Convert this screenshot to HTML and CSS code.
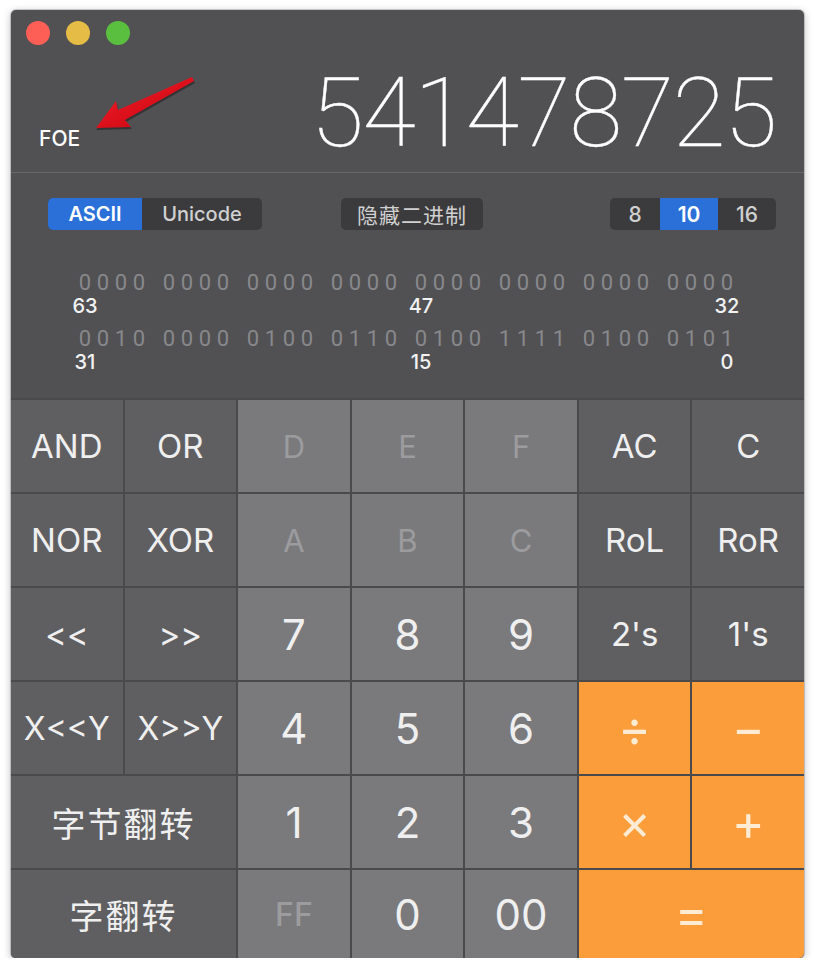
FILE: index.html
```html
<!DOCTYPE html>
<html lang="zh">
<head>
<meta charset="utf-8">
<title>Programmer Calculator</title>
<link rel="stylesheet" href="styles.css">
</head>
<body>
<div class="window">
  <header class="titlebar">
    <div class="lights">
      <span class="light red"></span>
      <span class="light yellow"></span>
      <span class="light green"></span>
    </div>
    <div class="display">
      <span class="mode">FOE</span>
      <span class="value">541478725</span>
    </div>
    <svg class="arrow" width="200" height="140" viewBox="0 0 200 140">
      <defs>
        <linearGradient id="ar" x1="0" y1="0" x2="1" y2="1">
          <stop offset="0" stop-color="#f5222c"/>
          <stop offset="1" stop-color="#c4000c"/>
        </linearGradient>
      </defs>
      <polygon class="arrow-shadow" points="85,120 106,93 108,102 182,69 184,73 115,112 121,119"/>
      <polygon fill="url(#ar)" points="85,118 105,91 107,100 181,67 183,71 114,110 120,117"/>
    </svg>
  </header>

  <section class="panel">
    <div class="controls">
      <div class="seg left">
        <span class="seg-item w94 active">ASCII</span>
        <span class="seg-item w120">Unicode</span>
      </div>
      <div class="seg center">
        <span class="seg-item w142 cjk">隐藏二进制</span>
      </div>
      <div class="seg right">
        <span class="seg-item w50">8</span>
        <span class="seg-item w58 active">10</span>
        <span class="seg-item w58">16</span>
      </div>
    </div>

    <div class="bits">
      <div class="bitrow">
        <div class="grp"><span>0</span><span>0</span><span>0</span><span>0</span></div>
        <div class="grp"><span>0</span><span>0</span><span>0</span><span>0</span></div>
        <div class="grp"><span>0</span><span>0</span><span>0</span><span>0</span></div>
        <div class="grp"><span>0</span><span>0</span><span>0</span><span>0</span></div>
        <div class="grp"><span>0</span><span>0</span><span>0</span><span>0</span></div>
        <div class="grp"><span>0</span><span>0</span><span>0</span><span>0</span></div>
        <div class="grp"><span>0</span><span>0</span><span>0</span><span>0</span></div>
        <div class="grp"><span>0</span><span>0</span><span>0</span><span>0</span></div>
      </div>
      <div class="lblrow">
        <span class="lbl first">63</span>
        <span class="lbl mid">47</span>
        <span class="lbl last">32</span>
      </div>
      <div class="bitrow second">
        <div class="grp"><span>0</span><span>0</span><span>1</span><span>0</span></div>
        <div class="grp"><span>0</span><span>0</span><span>0</span><span>0</span></div>
        <div class="grp"><span>0</span><span>1</span><span>0</span><span>0</span></div>
        <div class="grp"><span>0</span><span>1</span><span>1</span><span>0</span></div>
        <div class="grp"><span>0</span><span>1</span><span>0</span><span>0</span></div>
        <div class="grp"><span>1</span><span>1</span><span>1</span><span>1</span></div>
        <div class="grp"><span>0</span><span>1</span><span>0</span><span>0</span></div>
        <div class="grp"><span>0</span><span>1</span><span>0</span><span>1</span></div>
      </div>
      <div class="lblrow">
        <span class="lbl first">31</span>
        <span class="lbl mid">15</span>
        <span class="lbl last">0</span>
      </div>
    </div>
  </section>

  <main class="keys">
    <div class="key fn">AND</div>
    <div class="key fn">OR</div>
    <div class="key hex">D</div>
    <div class="key hex">E</div>
    <div class="key hex">F</div>
    <div class="key fn">AC</div>
    <div class="key fn">C</div>

    <div class="key fn">NOR</div>
    <div class="key fn">XOR</div>
    <div class="key hex">A</div>
    <div class="key hex">B</div>
    <div class="key hex">C</div>
    <div class="key fn">RoL</div>
    <div class="key fn">RoR</div>

    <div class="key fn sym">&lt;&lt;</div>
    <div class="key fn sym">&gt;&gt;</div>
    <div class="key num">7</div>
    <div class="key num">8</div>
    <div class="key num">9</div>
    <div class="key fn">2's</div>
    <div class="key fn">1's</div>

    <div class="key fn shift">X&lt;&lt;Y</div>
    <div class="key fn shift">X&gt;&gt;Y</div>
    <div class="key num">4</div>
    <div class="key num">5</div>
    <div class="key num">6</div>
    <div class="key op">÷</div>
    <div class="key op">−</div>

    <div class="key fn cjk span2">字节翻转</div>
    <div class="key num">1</div>
    <div class="key num">2</div>
    <div class="key num">3</div>
    <div class="key op">×</div>
    <div class="key op">+</div>

    <div class="key fn cjk span2">字翻转</div>
    <div class="key hex ff">FF</div>
    <div class="key num">0</div>
    <div class="key num">00</div>
    <div class="key op span2">=</div>
  </main>
</div>
</body>
</html>
```

FILE: styles.css
```css
html, body {
  margin: 0;
  padding: 0;
  background: #ffffff;
}

body {
  font-family: Inter, "Noto Sans CJK SC", sans-serif;
  color: #f0f0f0;
}

.window {
  position: relative;
  margin: 10px 0 0 11px;
  width: 793px;
  height: 948px;
  background: #515154;
  border-radius: 5px;
  overflow: hidden;
  display: flex;
  flex-direction: column;
  box-shadow: 0 0 0 1px rgba(0, 0, 0, 0.16), 0 2px 8px rgba(0, 0, 0, 0.28);
}

/* ---------- title bar / display ---------- */
.titlebar {
  position: relative;
  height: 162px;
  border-bottom: 1px solid #67676a;
  flex: none;
}

.lights {
  display: flex;
  gap: 16px;
  padding: 11px 0 0 15px;
}

.light {
  width: 24px;
  height: 24px;
  border-radius: 50%;
  display: block;
}
.light.red { background: #fd5f57; }
.light.yellow { background: #e5bc46; }
.light.green { background: #5abf3f; }

.display {
  display: flex;
  align-items: baseline;
  justify-content: space-between;
  margin-top: 20px;
  padding: 0 29px 0 28px;
}

.mode {
  font-size: 21px;
  font-weight: 500;
  color: #ffffff;
}

.value {
  font-family: Roboto, "Liberation Sans", sans-serif;
  font-weight: 100;
  font-size: 97px;
  line-height: 96px;
  letter-spacing: -1.4px;
  margin-right: -1px;
  color: #ffffff;
  -webkit-text-stroke: 0.4px #ffffff;
}

.arrow {
  position: absolute;
  left: 0;
  top: 0;
}
.arrow-shadow {
  fill: rgba(0, 0, 0, 0.35);
}

/* ---------- control panel ---------- */
.panel {
  flex: none;
  height: 225px;
  box-sizing: border-box;
  padding: 25px 28px 25px 37px;
}

.controls {
  display: grid;
  grid-template-columns: 1fr auto 1fr;
  height: 32px;
}

.seg {
  display: flex;
  height: 32px;
  background: #3b3b3d;
  border-radius: 5px;
  overflow: hidden;
}
.seg.left { justify-self: start; }
.seg.center { justify-self: center; }
.seg.right { justify-self: end; }

.seg-item {
  display: flex;
  align-items: center;
  justify-content: center;
  font-size: 20px;
  font-weight: 500;
  color: #d0d0d0;
}
.seg-item.cjk {
  font-size: 21px;
  letter-spacing: 1px;
  font-weight: 400;
}
.seg-item.active {
  background: #2b6fd8;
  color: #ffffff;
  font-weight: 600;
}
.w50 { width: 50px; font-size: 21px; }
.w58 { width: 58px; font-size: 21px; }
.w94 { width: 94px; }
.w120 { width: 120px; }
.w142 { width: 142px; }

.bits {
  margin: 41px 0 0 28px;
}

.bitrow,
.lblrow {
  display: grid;
  grid-template-columns: repeat(8, 72px);
  column-gap: 12px;
}

.bitrow { height: 24px; }
.bitrow.second { margin-top: 10px; }

.grp {
  display: flex;
}
.grp span {
  width: 18px;
  text-align: center;
  font-family: Roboto, "Liberation Sans", sans-serif;
  font-size: 22px;
  line-height: 24px;
  color: #88888b;
}

.lblrow { height: 22px; }

.lbl {
  width: 18px;
  display: flex;
  justify-content: center;
  white-space: nowrap;
  font-size: 20px;
  line-height: 22px;
  font-weight: 500;
  color: #f2f2f2;
}
.lbl.first { grid-column: 1; }
.lbl.mid { grid-column: 5; }
.lbl.last { grid-column: 8; justify-self: end; }

/* ---------- keypad ---------- */
.keys {
  flex: 1;
  display: grid;
  grid-template-columns: repeat(7, 1fr);
  grid-template-rows: repeat(5, 92px) 1fr;
  gap: 2px;
  background: #4a4a4d;
  border-top: 2px solid #4a4a4d;
}

.key {
  display: flex;
  align-items: center;
  justify-content: center;
  font-size: 33px;
  font-weight: 400;
  color: #efefef;
}

.key.fn { background: #5f5f62; }
.key.num { background: #7a7a7d; font-size: 42px; }
.key.hex { background: #7a7a7d; color: #9c9c9f; font-size: 31px; }
.key.hex.ff { font-weight: 500; font-size: 32px; }
.key.op { background: #fb9d3b; color: #fdebd4; font-size: 50px; }
.key.sym { font-size: 33px; }
.key.shift { font-size: 32px; }
.key.cjk { font-size: 34px; letter-spacing: 2px; }
.span2 { grid-column: span 2; }
```
